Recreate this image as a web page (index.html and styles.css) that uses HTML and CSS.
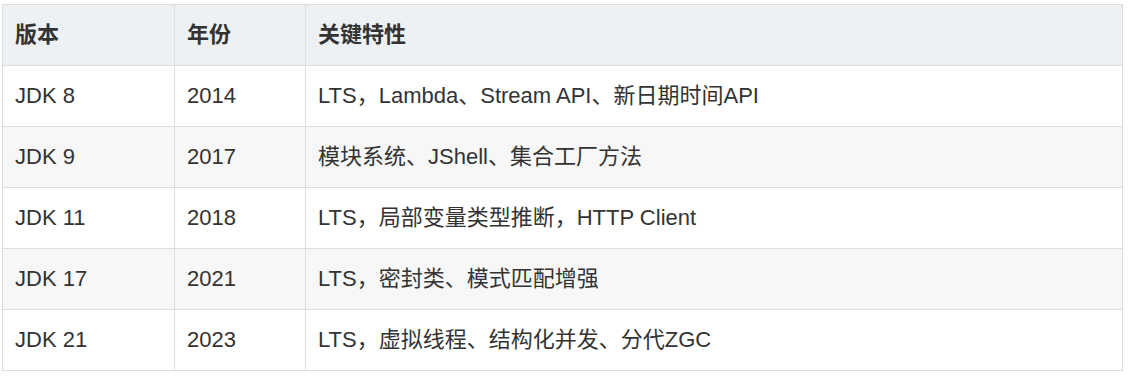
FILE: index.html
```html
<!DOCTYPE html>
<html lang="zh-CN">
<head>
<meta charset="utf-8">
<title>JDK 版本</title>
<link rel="stylesheet" href="styles.css">
</head>
<body>
<table class="versions">
  <colgroup>
    <col class="col-ver">
    <col class="col-year">
    <col class="col-feat">
  </colgroup>
  <thead>
    <tr><th>版本</th><th>年份</th><th>关键特性</th></tr>
  </thead>
  <tbody>
    <tr><td>JDK 8</td><td>2014</td><td>LTS，Lambda、Stream API、新日期时间API</td></tr>
    <tr><td>JDK 9</td><td>2017</td><td>模块系统、JShell、集合工厂方法</td></tr>
    <tr><td>JDK 11</td><td>2018</td><td>LTS，局部变量类型推断，HTTP Client</td></tr>
    <tr><td>JDK 17</td><td>2021</td><td>LTS，密封类、模式匹配增强</td></tr>
    <tr><td>JDK 21</td><td>2023</td><td>LTS，虚拟线程、结构化并发、分代ZGC</td></tr>
  </tbody>
</table>
</body>
</html>
```
FILE: styles.css
```css
html, body {
  margin: 0;
  background: #ffffff;
}
body {
  padding: 4px 2px;
  font-family: "Liberation Sans", Arial, "Noto Sans CJK SC", sans-serif;
  font-size: 22px;
  color: #333333;
}
.versions {
  border-collapse: collapse;
  table-layout: fixed;
  width: 1121px;
}
.col-ver { width: 172px; }
.col-year { width: 131px; }
.versions th,
.versions td {
  border: 1px solid #dddddd;
  padding: 15px 12px;
  line-height: 30px;
  height: 30px;
  text-align: left;
  vertical-align: middle;
  white-space: nowrap;
}
.versions th {
  background: #eef1f4;
  font-weight: bold;
}
.versions tbody tr:nth-child(even) td {
  background: #f7f7f7;
}
```
